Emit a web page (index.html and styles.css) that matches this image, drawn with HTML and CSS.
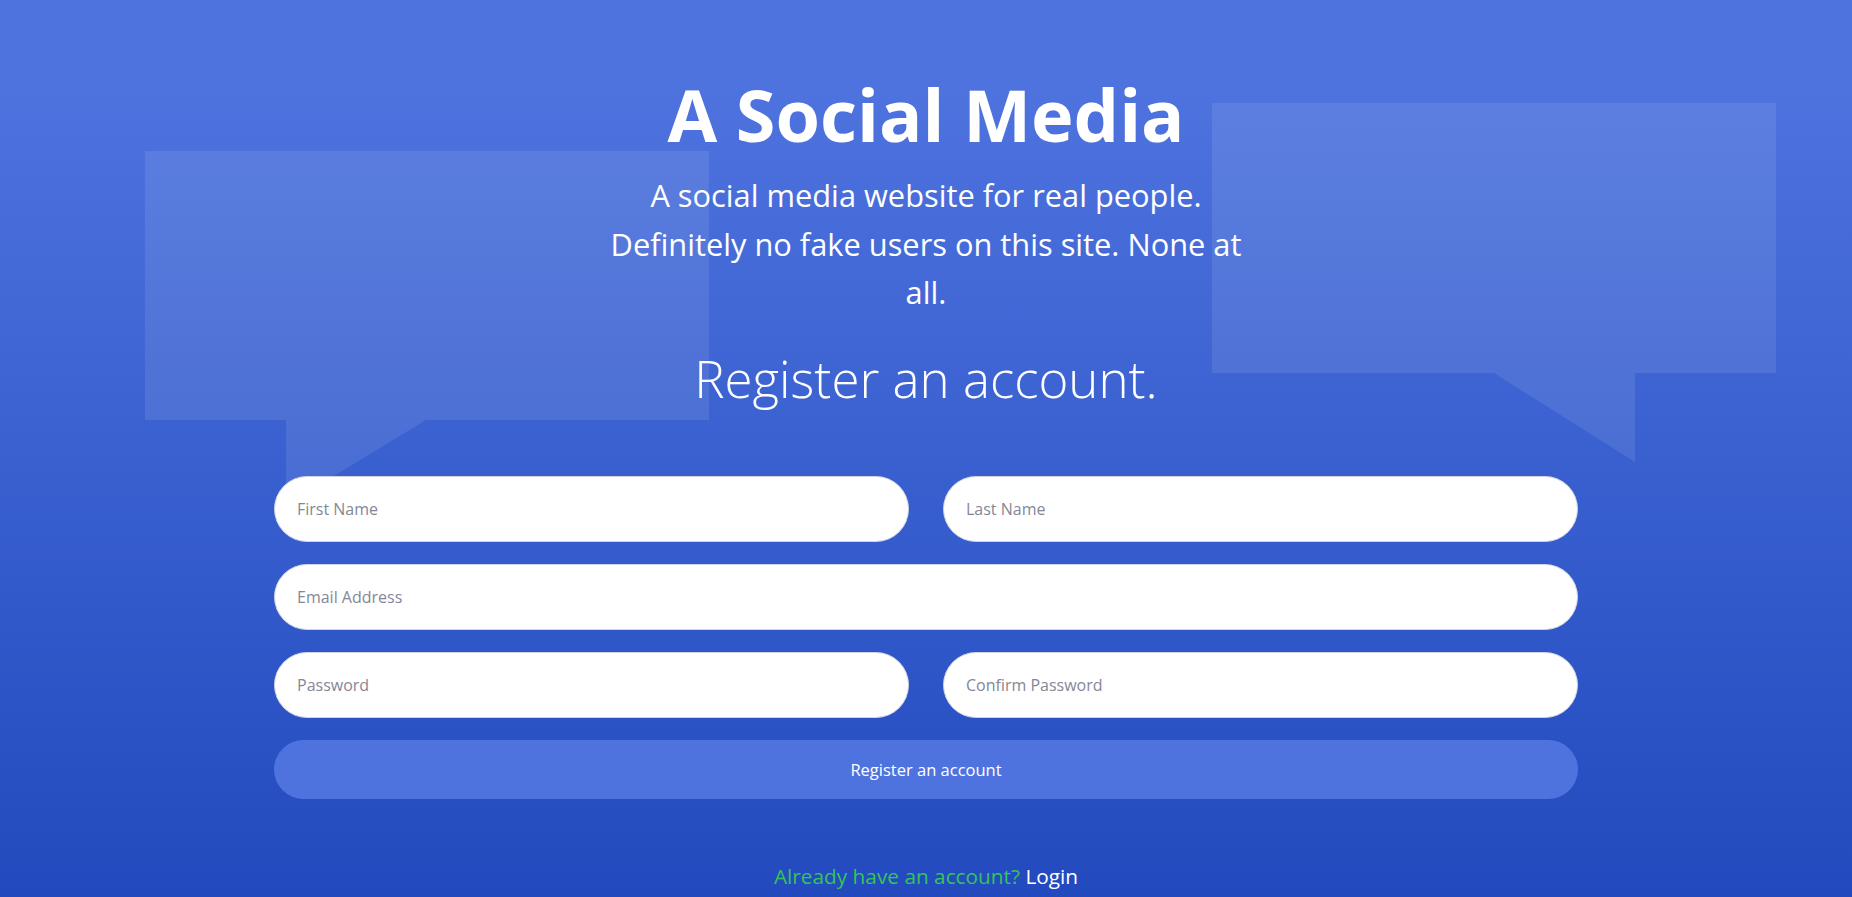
FILE: index.html
```html
<!DOCTYPE html>
<html lang="en">
<head>
<meta charset="utf-8">
<title>A Social Media</title>
<link rel="stylesheet" href="styles.css">
</head>
<body>
<div class="page">
  <svg class="bubble bubble-left" width="564" height="354" viewBox="0 0 564 354" aria-hidden="true">
    <polygon points="0,0 564,0 564,269 281,269 141,354 141,269 0,269" />
  </svg>
  <svg class="bubble bubble-right" width="564" height="359" viewBox="0 0 564 359" aria-hidden="true">
    <polygon points="0,0 564,0 564,270 423,270 423,359 282,270 0,270" />
  </svg>

  <main class="content">
    <header class="hero">
      <h1 class="title">A Social Media</h1>
      <p class="subtitle">A social media website for real people. Definitely no fake users on this site. None at all.</p>
      <h2 class="register-heading">Register an account.</h2>
    </header>

    <form class="form">
      <div class="row two">
        <input class="field" type="text" placeholder="First Name">
        <input class="field" type="text" placeholder="Last Name">
      </div>
      <div class="row">
        <input class="field" type="email" placeholder="Email Address">
      </div>
      <div class="row two">
        <input class="field" type="password" placeholder="Password">
        <input class="field" type="password" placeholder="Confirm Password">
      </div>
      <button class="submit" type="button">Register an account</button>
    </form>

    <p class="login-line"><span class="login-question">Already have an account?</span> <a class="login-link" href="#">Login</a></p>
  </main>
</div>
</body>
</html>
```

FILE: styles.css
```css
html, body {
  margin: 0;
  padding: 0;
}

body {
  font-family: "Open Sans", "Noto Sans", "Liberation Sans", sans-serif;
  color: #fff;
}

.page {
  position: relative;
  min-height: 100vh;
  overflow: hidden;
  background-color: #4e73df;
  background-image: linear-gradient(180deg, #4e73df 10%, #224abe 100%);
}

.bubble {
  position: absolute;
  display: block;
  fill: rgba(255, 255, 255, 0.09);
}

.bubble-left {
  left: 145px;
  top: 151px;
}

.bubble-right {
  left: 1212px;
  top: 103px;
}

.content {
  position: relative;
  padding-top: 71px;
  padding-bottom: 9px;
  text-align: center;
}

.hero {
  display: flex;
  flex-direction: column;
  align-items: center;
}

.title {
  margin: 0;
  font-size: 72px;
  line-height: 87px;
  font-weight: 700;
}

.subtitle {
  margin: 13px 0 0;
  width: 656px;
  font-size: 30.8px;
  line-height: 48.5px;
  font-weight: 400;
}

.register-heading {
  margin: 29px 0 0;
  font-size: 51px;
  line-height: 64px;
  font-weight: 300;
}

.form {
  width: 1304px;
  margin: 66px auto 0;
  display: flex;
  flex-direction: column;
  gap: 22px;
}

.row {
  display: grid;
  grid-template-columns: 1fr;
  gap: 34px;
}

.row.two {
  grid-template-columns: 1fr 1fr;
}

.field {
  box-sizing: border-box;
  height: 66px;
  width: 100%;
  margin: 0;
  padding: 0 22px;
  border: 1px solid #d1d3e2;
  border-radius: 10rem;
  background: #fff;
  font-family: inherit;
  font-size: 16px;
  color: #6e707e;
  outline: none;
}

.field::placeholder {
  color: #858796;
  opacity: 1;
}

.submit {
  height: 59px;
  width: 100%;
  margin: 0;
  border: none;
  border-radius: 10rem;
  background: #4e73df;
  color: #fff;
  font-family: inherit;
  font-size: 16.5px;
  cursor: pointer;
}

.login-line {
  margin: 65px 0 0;
  font-size: 20.8px;
  line-height: 24px;
}

.login-question {
  color: #36c25c;
}

.login-link {
  color: #fff;
  text-decoration: none;
}
```
